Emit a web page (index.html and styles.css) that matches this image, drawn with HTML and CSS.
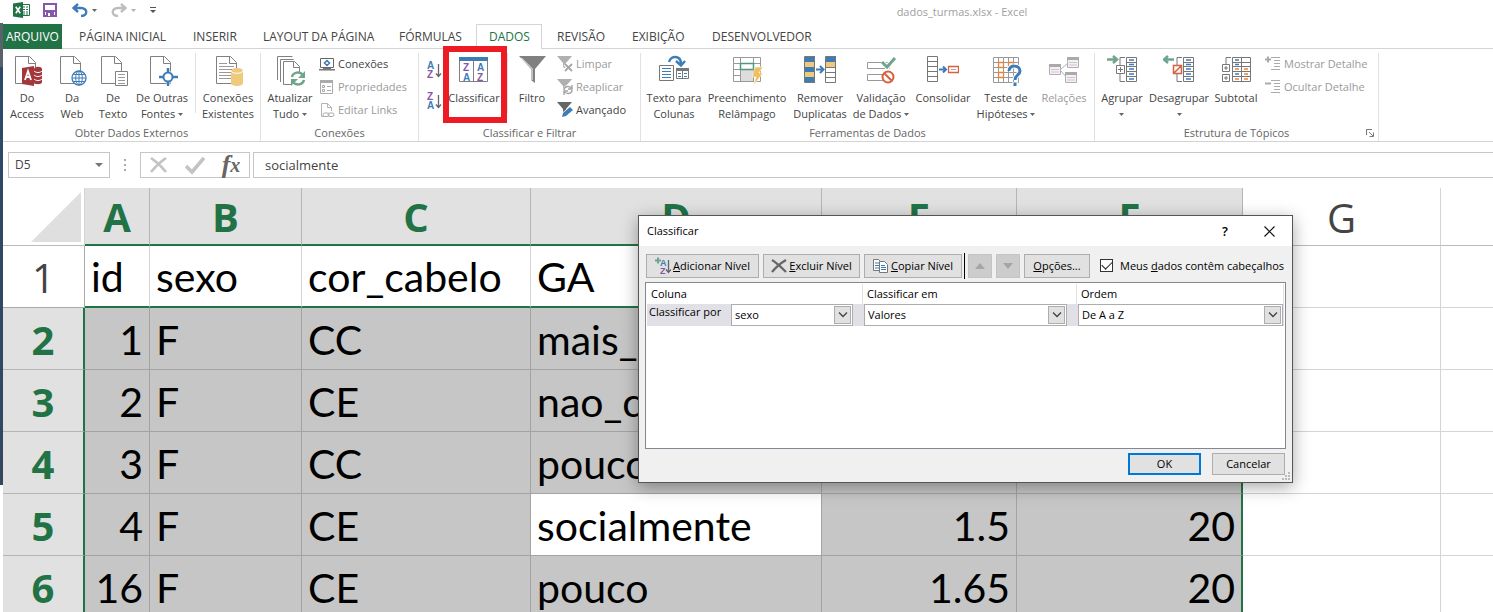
FILE: index.html
```html
<!DOCTYPE html>
<html lang="pt-BR">
<head>
<meta charset="utf-8">
<title>dados_turmas.xlsx - Excel</title>
<link rel="stylesheet" href="styles.css">
</head>
<body>
<svg class="defs" aria-hidden="true">
  <defs>
    <symbol id="page" viewBox="0 0 32 32"><path d="M4.500 2.500h14l6 6v21h-20z" fill="#fff" stroke="#808080"/><path d="M17.500 2.500v7h7" fill="none" stroke="#808080"/></symbol>
    <symbol id="down" viewBox="0 0 5 3"><path d="M0 0h5L2.500 3z" fill="#666"/></symbol>
    <symbol id="chevron" viewBox="0 0 10 6"><path d="M1 .5l4 4 4-4" fill="none" stroke="#444" stroke-width="1.300"/></symbol>
    <symbol id="funnel" viewBox="0 0 16 16"><path d="M0 0h15L9 7v6L6 11V7z"/></symbol>
  </defs>
</svg>
<div class="shell">
  <div class="backdrop"></div>
  <main class="app">
    <header class="titlebar">
      <div class="quick">
        <svg class="q-excel" width="17" height="16" viewBox="0 0 17 16"><path d="M8 2.500h8.500v11H8" fill="#fff" stroke="#217346"/><path d="M10 5h2M13 5h2M10 7.500h2M13 7.500h2M10 10h2M13 10h2M10 12h2M13 12h2" stroke="#217346"/><path d="M0 1.500L10 0v16L0 14.500z" fill="#217346"/><path d="M2.800 4.800l4.400 6.400M7.200 4.800l-4.400 6.400" stroke="#fff" stroke-width="1.600"/></svg>
        <svg class="q-save" width="14" height="14" viewBox="0 0 14 14"><path d="M1 1h12v12H1z" fill="#fff" stroke="#8756a8" stroke-width="2"/><path d="M2 8h10" stroke="#8756a8" stroke-width="2"/><path d="M3 9h8v4H3z" fill="#8756a8"/><path d="M5 10h2v3H5z" fill="#fff"/></svg>
        <svg class="q-undo" width="16" height="14" viewBox="0 0 16 14"><path d="M6 1L1.500 5 6 9M2 5h7c7 0 7 8 0 8" fill="none" stroke="#3e7cb8" stroke-width="2.400"/></svg>
        <svg class="q-arrow" width="5" height="3"><use href="#down"/></svg>
        <svg class="q-redo" width="16" height="14" viewBox="0 0 16 14"><path d="M10 1l4.500 4L10 9M14 5H7c-7 0-7 8 0 8" fill="none" stroke="#bdbdbd" stroke-width="2.400"/></svg>
        <svg class="q-arrow faint" width="5" height="3"><use href="#down"/></svg>
        <svg class="q-more" width="6" height="6" viewBox="0 0 6 6"><path d="M0 .5h6" stroke="#555"/><path d="M0 3h6L3 6z" fill="#555"/></svg>
      </div>
      <h1 class="doc">dados_turmas.xlsx - Excel</h1>
    </header>

    <nav class="tabs">
      <button class="tab file">ARQUIVO</button>
      <button class="tab">PÁGINA INICIAL</button>
      <button class="tab">INSERIR</button>
      <button class="tab">LAYOUT DA PÁGINA</button>
      <button class="tab">FÓRMULAS</button>
      <button class="tab active">DADOS</button>
      <button class="tab">REVISÃO</button>
      <button class="tab">EXIBIÇÃO</button>
      <button class="tab">DESENVOLVEDOR</button>
    </nav>

    <div class="ribbon">
      <section class="group g-external">
        <div class="tools">
          <button class="big"><svg width="32" height="32"><use href="#page"/><path d="M23 15c0-3 8-3 8 0v13c0 3-8 3-8 0z" fill="#a4373a"/><path d="M23 17c2 2 6 2 8 0M23 21c2 2 6 2 8 0M23 25c2 2 6 2 8 0" fill="none" stroke="#fff" /><path d="M11 14l12-2v20l-12-2z" fill="#a4373a"/><path d="M14 26l3-9 3 9M15 23h4" fill="none" stroke="#fff" stroke-width="1.800"/></svg><span>Do<br>Access</span></button>
          <button class="big"><svg width="32" height="32"><use href="#page"/><circle cx="23" cy="24" r="7" fill="#fff" stroke="#3e7cb8" stroke-width="1.300"/><ellipse cx="23" cy="24" rx="3.300" ry="7" fill="none" stroke="#3e7cb8"/><path d="M23 17v14M16 24h14M17 20.500h12M17 27.500h12" stroke="#3e7cb8"/></svg><span>Da<br>Web</span></button>
          <button class="big"><svg width="32" height="32"><use href="#page"/><path d="M18.500 17.500h12v14h-12z" fill="#fff" stroke="#808080"/><path d="M21 20.500h7M21 23.500h7M21 26.500h7M21 29.500h7" stroke="#999"/></svg><span>De<br>Texto</span></button>
          <button class="big"><svg width="32" height="32"><use href="#page"/><path d="M22 15l8 8-8 8-8-8z" fill="#fff"/><circle cx="22" cy="23" r="4.500" fill="#fff" stroke="#3e7cb8" stroke-width="2"/><path d="M22 14v5M22 27v5M13 23h5M26 23h6" stroke="#3e7cb8" stroke-width="2.500"/></svg><span>De Outras<br>Fontes <svg class="dd"><use href="#down"/></svg></span></button>
          <i class="rule"></i>
          <button class="big"><svg width="32" height="32"><use href="#page"/><path d="M7 9.500h8M7 12.500h15M7 15.500h15M7 18.500h12M7 21.500h12M7 24.500h12" stroke="#999"/><path d="M19 17c0-4 12-4 12 0v12c0 4-12 4-12 0z" fill="#efc97c"/><path d="M19 17c1 3 11 3 12 0" fill="none" stroke="#fff"/></svg><span>Conexões<br>Existentes</span></button>
        </div>
        <h2>Obter Dados Externos</h2>
      </section>

      <section class="group g-links">
        <div class="tools">
          <button class="big"><svg width="32" height="32"><path d="M3.500 26V2.500h15M6.500 28V5.500h13" fill="none" stroke="#808080"/><path d="M9.500 7.500h11l5 5v18h-16z" fill="#fff" stroke="#808080"/><path d="M19.500 8v5.500h6" fill="none" stroke="#808080"/><path d="M17 18h14v14H17z" fill="#fff"/><path d="M18 23c1-5 8-6 11-2M30 26c-1 5-8 6-11 2" fill="none" stroke="#6fa58c" stroke-width="2.500"/><path d="M31 17v7h-7zM17 32v-7h7z" fill="#6fa58c"/></svg><span>Atualizar<br>Tudo <svg class="dd"><use href="#down"/></svg></span></button>
          <div class="list">
            <button class="small"><svg width="16" height="16"><path d="M1.500 2.500h13v9h-13z" fill="#fff" stroke="#666"/><path d="M0 13h16v1.500H0zM4 12h8v2H4z" fill="#777"/><path d="M8 4.500l2.500 2.500L8 9.500 5.500 7z" fill="#fff" stroke="#3e7cb8" stroke-width="1.500"/></svg>Conexões</button>
            <button class="small off"><svg width="16" height="16"><path d="M1.500 1.500h12v13h-12z" fill="#fff" stroke="#aaa"/><path d="M1 1h13v3H1z" fill="#aaa"/><path d="M3.500 6.500h2v2h-2zM3.500 10.500h2v2h-2zM8 7.500h4M8 11.500h4" stroke="#aaa" fill="none"/></svg>Propriedades</button>
            <button class="small off"><svg width="16" height="16"><path d="M8 14.500H2.500v-13h6l4 4V9M8.500 1.500v4h4" fill="#fff" stroke="#b5b5b5"/><rect x="4" y="11" width="6" height="3.500" rx="1.700" fill="#fff" stroke="#aaa"/><rect x="9" y="11" width="6" height="3.500" rx="1.700" fill="none" stroke="#aaa"/></svg>Editar Links</button>
          </div>
        </div>
        <h2>Conexões</h2>
      </section>

      <section class="group g-sort">
        <div class="tools">
          <div class="orders">
            <button aria-label="Classificar de A a Z"><svg width="16" height="18"><text x="1" y="8" class="ga">A</text><text x="1" y="17" class="gz">Z</text><path d="M12.500 3v12M10 12.500l2.500 3 2.500-3" fill="none" stroke="#666" stroke-width="1.300"/></svg></button>
            <button aria-label="Classificar de Z a A"><svg width="16" height="18"><text x="1" y="8" class="gz">Z</text><text x="1" y="17" class="ga">A</text><path d="M12.500 3v12M10 12.500l2.500 3 2.500-3" fill="none" stroke="#666" stroke-width="1.300"/></svg></button>
          </div>
          <button class="big marked"><svg width="32" height="32"><path d="M1.500 4.500h28v23h-28zM15.500 7v21" fill="#fff" stroke="#808080"/><path d="M1 3h29v4H1z" fill="#3e7cb8"/><text x="5" y="17" class="gz">Z</text><text x="5" y="27" class="ga">A</text><text x="19" y="17" class="ga">A</text><text x="19" y="27" class="gz">Z</text></svg><span>Classificar</span></button>
          <i class="rule"></i>
          <button class="big"><svg width="32" height="32"><path d="M3 2h27L19 15v14l-4-3V15z" fill="#808080"/><path d="M5.500 4l10.500 10.500V26" fill="none" stroke="#fff"/></svg><span>Filtro</span></button>
          <div class="list">
            <button class="small off"><svg width="16" height="16"><use href="#funnel" fill="#b0b0b0"/><path d="M8 8l7 7M15 8l-7 7" stroke="#fff" stroke-width="4"/><path d="M8 8l7 7M15 8l-7 7" stroke="#a5a5a5" stroke-width="1.800"/></svg>Limpar</button>
            <button class="small off"><svg width="16" height="16"><use href="#funnel" fill="#b0b0b0"/><circle cx="11" cy="11" r="5" fill="#fff"/><path d="M7 11c0-4 6-5 8-1M15 11c0 4-6 5-8 1M15 6v4h-4M7 16v-4h4" fill="none" stroke="#a5a5a5" stroke-width="1.400"/></svg>Reaplicar</button>
            <button class="small"><svg width="16" height="16"><use href="#funnel" fill="#666"/><path d="M4 16l1-5 8-7 4 4-8 8z" fill="#fff"/><path d="M5 15l1-4 7-6 3 3-7 6z" fill="#3e7cb8"/></svg>Avançado</button>
          </div>
        </div>
        <h2>Classificar e Filtrar</h2>
      </section>

      <section class="group g-data">
        <div class="tools">
          <button class="big"><svg width="32" height="32"><path d="M1.500 11.500h14v15h-14z" fill="#fff" stroke="#777"/><path d="M4 14.500h9M4 17.500h9M4 20.500h9M4 23.500h9" stroke="#3e7cb8"/><path d="M18.500 14.500h12v10h-12zM24.500 17v8" fill="#fff" stroke="#777"/><path d="M18 14h13v3H18z" fill="#777"/><path d="M20 19.500h3M26 19.500h3M20 22.500h3M26 22.500h3" stroke="#3e7cb8"/><path d="M11 8c2-7 12-7 12 2M18 7l5 4.500L27 7" fill="none" stroke="#3e7cb8" stroke-width="2.400"/></svg><span>Texto para<br>Colunas</span></button>
          <button class="big"><svg width="32" height="32"><path d="M2.500 3.500h27v24h-27zM2.500 9.500h27M2.500 15.500h27M2.500 21.500h27M9.500 3.500v24M22.500 3.500v24" fill="#fff" stroke="#999"/><path d="M10 16h12v11H10z" fill="#ddd"/><path d="M9.500 9.500h13v6h-13z" fill="#fff" stroke="#4f9a78" stroke-width="1.500"/><path d="M24 13h8l-4 6h4L22 32l3-9h-4z" fill="#efc060" stroke="#fff" stroke-width=".6"/></svg><span>Preenchimento<br>Relâmpago</span></button>
          <button class="big"><svg width="32" height="32"><path d="M1 2h10v27H1zM22 2h10v6H22z" fill="#3e7cb8"/><path d="M1 8h10v5H1zM1 18h10v5H1zM22 8h10v5H22z" fill="#efc97c"/><path d="M.5 2.500h10v26H.5zM21.500 2.500h10v26h-10zM21.500 13.500h10M21.500 18.500h10M21.500 23.500h10" fill="none" stroke="#777"/><path d="M12 15.500h6M16 12l3.500 3.500L16 19" fill="none" stroke="#3e7cb8" stroke-width="2"/></svg><span>Remover<br>Duplicatas</span></button>
          <button class="big"><svg width="32" height="32"><path d="M2.500 8.500h22v6h-22zM2.500 20.500h20v6h-20z" fill="#fff" stroke="#999"/><path d="M17 8l5 5 9-10" fill="none" stroke="#fff" stroke-width="5"/><path d="M17 8l5 5 8-9" fill="none" stroke="#6fa58c" stroke-width="3"/><circle cx="23" cy="23" r="5.500" fill="#fff" stroke="#d8603f" stroke-width="2"/><path d="M19 19l8 8" stroke="#d8603f" stroke-width="2"/></svg><span>Validação<br>de Dados <svg class="dd"><use href="#down"/></svg></span></button>
          <button class="big"><svg width="32" height="32"><path d="M.5 2.500h10v25H.5zM.5 7.500h10M.5 12.500h10M.5 17.500h10M.5 22.500h10" fill="#fff" stroke="#777"/><path d="M12 15.500h6M16 12.500l3 3-3 3" fill="none" stroke="#3e7cb8" stroke-width="2"/><path d="M21.500 12.500h10v6h-10z" fill="#fff" stroke="#d8603f" stroke-width="1.300"/><path d="M24 15.500h5" stroke="#aaa"/></svg><span>Consolidar</span></button>
          <button class="big"><svg width="32" height="32"><path d="M3.500 3.500h25v25h-25zM3.500 8.500h25M3.500 13.500h25M3.500 18.500h25M3.500 23.500h25M8.500 3.500v25M13.500 3.500v25M18.500 3.500v25M23.500 3.500v25" fill="#fff" stroke="#999"/><path d="M8.500 8.500h5v5h-5zM8.500 18.500h5v5h-5zM18.500 8.500h5v5h-5z" fill="#fff" stroke="#e8833a" stroke-width="1.300"/><path d="M19 17c0-7 11-6 11 0 0 4-5 4-5 9M25 28v4" fill="none" stroke="#fff" stroke-width="5"/><path d="M19 17c0-7 11-6 11 0 0 4-5 4-5 9M25 28.500v3.500" fill="none" stroke="#3e7cb8" stroke-width="3"/></svg><span>Teste de<br>Hipóteses <svg class="dd"><use href="#down"/></svg></span></button>
          <button class="big off"><svg width="32" height="32"><path d="M12 16l9-8M12 16l8 9" stroke="#b0b0b0"/><path d="M1.500 10.500h11v10h-11zM19.500 3.500h11v10h-11zM17.500 18.500h11v10h-11z" fill="#f6f0f6" stroke="#b0b0b0"/><path d="M1 10h12v3H1zM19 3h12v3H19zM17 18h12v3H17z" fill="#aaa"/><path d="M3 15.500h8M3 18h8M21 8.500h8M21 11h8M19 23.500h8M19 26h8" stroke="#d0c4d0"/></svg><span>Relações</span></button>
        </div>
        <h2>Ferramentas de Dados</h2>
      </section>

      <section class="group g-outline">
        <div class="tools">
          <button class="big"><svg width="32" height="32"><path d="M20.500 3.500h10v24h-10zM20.500 8.500h10M20.500 12.500h10M20.500 17.500h10M20.500 22.500h10M19 3.500h-5V11M14 20v7.500h5M10.500 11.500h8v8h-8zM12 15.500h5M14.500 13v5" fill="none" stroke="#777"/><path d="M23 6h5M23 10.500h5M23 15h5M23 20h5M23 25h5" stroke="#3e7cb8" stroke-width="1.500"/><path d="M1 5.500h9M7 2l4 3.500L7 9" fill="none" stroke="#6fa58c" stroke-width="2.500"/></svg><span>Agrupar<br><svg class="dd"><use href="#down"/></svg></span></button>
          <button class="big"><svg width="32" height="32"><path d="M20.500 3.500h10v24h-10zM20.500 8.500h10M20.500 12.500h10M20.500 17.500h10M20.500 22.500h10M19 3.500h-5V11M14 20v7.500h5" fill="none" stroke="#777"/><path d="M23 6h5M23 10.500h5M23 15h5M23 20h5M23 25h5" stroke="#3e7cb8" stroke-width="1.500"/><path d="M10.500 11.500h8v8h-8zM11 19l7-7" fill="none" stroke="#d8603f" stroke-width="1.500"/><path d="M11 5.500H2M5 2L1 5.500 5 9" fill="none" stroke="#6fa58c" stroke-width="2.500"/></svg><span>Desagrupar<br><svg class="dd"><use href="#down"/></svg></span></button>
          <button class="big"><svg width="32" height="32"><path d="M12.500 3.500h18v24h-18zM21.500 3.500v24M12.500 8.500h18M12.500 12.500h18M12.500 17.500h18M12.500 22.500h18M11 3.500H6V10M2.500 10.500h7v7h-7zM2.500 20.500h7v7h-7zM4 14h4M6 12v4M4 24h4M6 22v4" fill="none" stroke="#777"/><path d="M15 6h4M15 10.500h4M15 20h4" stroke="#3e7cb8" stroke-width="1.500"/><path d="M15 15h4M24 15h4M24 20h4M15 25h4M24 25h4" stroke="#e8833a" stroke-width="1.500"/></svg><span>Subtotal</span></button>
          <div class="list">
            <button class="small off"><svg width="16" height="16"><path d="M0 3.500h6M3 .5v6" stroke="#aaa" stroke-width="2"/><path d="M6 1.500h9M9 4.500h6M9 7.500h6M9 10.500h6M6 13.500h9" stroke="#aaa"/></svg>Mostrar Detalhe</button>
            <button class="small off"><svg width="16" height="16"><path d="M0 4.500h6" stroke="#aaa" stroke-width="2"/><path d="M6 1.500h9M9 4.500h6M9 7.500h6M9 10.500h6M6 13.500h9" stroke="#aaa"/></svg>Ocultar Detalhe</button>
          </div>
        </div>
        <h2>Estrutura de Tópicos</h2>
        <button class="launcher" aria-label="Configurações"><svg width="8" height="8"><path d="M.5 6V.5H6M3 3l4 4M7.500 3.500v4h-4" fill="none" stroke="#777"/></svg></button>
      </section>
    </div>

    <div class="formula">
      <div class="namebox"><input type="text" value="D5" aria-label="Caixa de nome"><svg width="8" height="4" viewBox="0 0 5 3" preserveAspectRatio="none"><path d="M0 0h5L2.500 3z" fill="#777"/></svg></div>
      <svg class="dots" width="2" height="12"><path d="M0 0h2v2H0zM0 5h2v2H0zM0 10h2v2H0z" fill="#aaa"/></svg>
      <div class="actions">
        <button aria-label="Cancelar"><svg width="20" height="20"><path d="M2 3c6 4 11 9 15 14M17 3C11 7 6 12 2 17" fill="none" stroke="#c3c3c3" stroke-width="2.600"/></svg></button>
        <button aria-label="Inserir"><svg width="20" height="20"><path d="M1 11l6 6L19 3" fill="none" stroke="#c3c3c3" stroke-width="3.600"/></svg></button>
        <button class="fx" aria-label="Inserir função"><span>f</span><small>x</small></button>
      </div>
      <input class="content" type="text" value="socialmente" aria-label="Barra de fórmulas">
    </div>

    <div class="sheet">
      <table>
        <colgroup><col class="c-head"><col class="c-a"><col class="c-b"><col class="c-c"><col class="c-d"><col class="c-e"><col class="c-f"><col class="c-g"><col></colgroup>
        <thead>
          <tr><th class="corner"><svg width="50" height="50"><path d="M50 0v50H0z" fill="#dfdfdf"/></svg></th><th class="on">A</th><th class="on">B</th><th class="on">C</th><th class="on">D</th><th class="on">E</th><th class="on">F</th><th>G</th><th></th></tr>
        </thead>
        <tbody>
          <tr class="first"><th>1</th><td>id</td><td>sexo</td><td>cor_cabelo</td><td>GA</td><td></td><td></td><td></td><td></td></tr>
          <tr class="sel"><th>2</th><td class="n">1</td><td>F</td><td>CC</td><td>mais_</td><td></td><td></td><td></td><td></td></tr>
          <tr class="sel"><th>3</th><td class="n">2</td><td>F</td><td>CE</td><td>nao_c</td><td></td><td></td><td></td><td></td></tr>
          <tr class="sel"><th>4</th><td class="n">3</td><td>F</td><td>CC</td><td>pouco</td><td></td><td></td><td></td><td></td></tr>
          <tr class="sel"><th>5</th><td class="n">4</td><td>F</td><td>CE</td><td class="current">socialmente</td><td class="n">1.5</td><td class="n">20</td><td></td><td></td></tr>
          <tr class="sel"><th>6</th><td class="n">16</td><td>F</td><td>CE</td><td>pouco</td><td class="n">1.65</td><td class="n">20</td><td></td><td></td></tr>
        </tbody>
      </table>
    </div>
  </main>
</div>

<div class="dialog" role="dialog" aria-labelledby="dlg-title">
  <div class="dlg-bar">
    <h2 id="dlg-title">Classificar</h2>
    <button class="help" aria-label="Ajuda">?</button>
    <button class="close" aria-label="Fechar"><svg width="11" height="11"><path d="M.5 .5l10 10M10.500 .5l-10 10" stroke="#111" stroke-width="1.200"/></svg></button>
  </div>
  <div class="dlg-tools">
    <button class="btn add"><svg width="16" height="18"><path d="M0 3.500h6M3 .5v6" stroke="#6fa58c" stroke-width="2"/><text x="5" y="9" class="ga sm">A</text><text x="5" y="17" class="gz sm">Z</text><path d="M13.500 3v12M11 12.500l2.500 3 2.500-3" fill="none" stroke="#666" stroke-width="1.300"/></svg><span><u>A</u>dicionar Nível</span></button>
    <button class="btn del"><svg width="16" height="16"><path d="M1 2c5 3 10 8 14 12M15 2C10 5 5 9 1 14" fill="none" stroke="#666" stroke-width="2.200"/></svg><span><u>E</u>xcluir Nível</span></button>
    <button class="btn copy"><svg width="16" height="16"><path d="M.5 1.500h5l2 2v9h-7z" fill="#fff" stroke="#777"/><path d="M2 5h4M2 7.500h4M2 10h4" stroke="#3e7cb8"/><path d="M6.500 3.500h5l3 3v8h-8z" fill="#fff" stroke="#777"/><path d="M8 7.500h4M8 9.500h5M8 11.500h5" stroke="#3e7cb8"/></svg><span><u>C</u>opiar Nível</span></button>
    <i class="bar"></i>
    <button class="btn move" disabled aria-label="Mover para cima"><svg width="10" height="6"><path d="M0 6l5-6 5 6z" fill="#a5a5a5"/></svg></button>
    <button class="btn move" disabled aria-label="Mover para baixo"><svg width="10" height="6"><path d="M0 0l5 6 5-6z" fill="#a5a5a5"/></svg></button>
    <button class="btn opt"><span><u>O</u>pções...</span></button>
    <label class="check"><input type="checkbox" checked><span>Meus <u>d</u>ados contêm cabeçalhos</span></label>
  </div>
  <div class="levels">
    <div class="lv-head"><span>Coluna</span><span>Classificar em</span><span>Ordem</span></div>
    <div class="lv-row">
      <label for="by">Classificar por</label>
      <div class="combo"><select id="by"><option>sexo</option></select><span class="arrow"><svg width="10" height="6"><use href="#chevron"/></svg></span></div>
      <div class="combo"><select aria-label="Classificar em"><option>Valores</option></select><span class="arrow"><svg width="10" height="6"><use href="#chevron"/></svg></span></div>
      <div class="combo"><select aria-label="Ordem"><option>De A a Z</option></select><span class="arrow"><svg width="10" height="6"><use href="#chevron"/></svg></span></div>
    </div>
  </div>
  <div class="dlg-foot">
    <button class="btn ok">OK</button>
    <button class="btn">Cancelar</button>
  </div>
  <svg class="grip" width="8" height="8"><path d="M6 0h2v2H6zM3 3h2v2H3zM6 3h2v2H6zM0 6h2v2H0zM3 6h2v2H3zM6 6h2v2H6z" fill="#bbb"/></svg>
</div>
</body>
</html>
```

FILE: styles.css
```css
*, *::before, *::after { box-sizing: border-box; }
body { margin: 0; background: #fff; color: #444; font: 11px/16px "Open Sans", "Noto Sans", sans-serif; overflow: hidden; }
button, input, select { font: inherit; color: inherit; margin: 0; padding: 0; border: 0; background: none; }
h1, h2 { margin: 0; font-size: inherit; font-weight: 400; }
svg { flex: none; }
.defs { position: absolute; width: 0; height: 0; }

.shell { display: flex; height: 100vh; overflow: hidden; }
.backdrop { flex: none; width: 3px; height: 462px; margin-top: 23px; background: linear-gradient(#59616b 44px, #2e4a6b 44px, #33475f); }
.app { flex: 1; min-width: 0; }

/* Title bar */
.titlebar { display: flex; height: 24px; }
.quick { display: flex; align-items: center; flex: 0 0 428px; height: 20px; padding-left: 10px; }
.q-save { margin-left: 13px; }
.q-undo { margin-left: 15px; }
.q-arrow { margin-left: 4px; }
.q-redo { margin-left: 14px; }
.q-more { margin-left: 14px; }
.faint { opacity: .5; }
.doc { flex: 1; padding-top: 4px; text-align: center; color: #a0a0a0; }

/* Tabs */
.tabs { display: grid; grid-template-columns: 63px 114px 70px 136px 90px 68px 75px 80px 1fr; height: 25px; border-bottom: 1px solid #d4d4d4; font-size: 12px; }
.tab { padding: 0 0 0 13px; text-align: left; white-space: nowrap; }
.tab.file { width: 59px; padding: 0; text-align: center; background: #217346; color: #fff; }
.tab.active { width: 66px; height: 25px; padding-left: 12px; border: 1px solid #d4d4d4; border-bottom: 0; background: #fff; color: #217346; }

/* Ribbon */
.ribbon { display: flex; height: 93px; border-bottom: 1px solid #d4d4d4; }
.group { position: relative; display: flex; flex-direction: column; flex: none; height: 88px; margin-top: 4px; border-right: 1px solid #e1e1e1; }
.tools { display: grid; height: 72px; }
.group h2 { text-align: center; color: #666; }
.g-external { width: 258px; }
.g-external .tools { grid-template-columns: 48px 42px 40px 58px 8px 58px; }
.g-links { width: 158px; }
.g-links .tools { grid-template-columns: 58px 1fr; }
.g-sort { width: 222px; }
.g-sort .tools { grid-template-columns: 26px 58px 8px 42px 1fr; }
.g-sort .list { padding-left: 4px; }
.g-data { width: 454px; }
.g-data .tools { grid-template-columns: 66px 80px 66px 56px 68px 58px 58px; }
.g-outline { width: 284px; }
.g-outline .tools { grid-template-columns: 54px 60px 54px 1fr; }
.g-outline .list { padding-left: 2px; }
.big { position: relative; display: flex; flex-direction: column; align-items: center; justify-content: flex-start; gap: 4px; min-width: 0; padding-top: 1px; white-space: nowrap; }
.dd { width: 5px; height: 3px; vertical-align: 2px; }
.off { color: #9a9a9a; }
.rule { justify-self: center; width: 1px; height: 60px; background: #e1e1e1; }
.list { display: flex; flex-direction: column; gap: 1px; }
.small { display: flex; align-items: center; gap: 3px; height: 22px; white-space: nowrap; }
.orders { display: flex; flex-direction: column; gap: 13px; padding: 8px 0 0 7px; }
.orders button { height: 18px; }
.orders svg { display: block; }
.ga, .gz { font: 700 10px "Liberation Sans", sans-serif; }
.sm { font-size: 9px; }
.ga { fill: #3e7cb8; }
.gz { fill: #8756a8; }
.marked::after { content: ""; position: absolute; z-index: 1; top: -7px; left: -2px; width: 64px; height: 77px; border: 6px solid #ed1c24; }
.launcher { position: absolute; right: 4px; bottom: 4px; }
.launcher svg { display: block; }

/* Formula bar */
.formula { display: flex; height: 46px; padding: 10px 0 10px 5px; }
.namebox, .actions, .content { height: 26px; border: 1px solid #c6c6c6; }
.namebox { display: flex; align-items: center; width: 102px; padding: 0 6px; font-size: 12px; }
.namebox input { flex: 1; min-width: 0; }
.dots { margin: 7px 14px 0; }
.actions { display: grid; grid-template-columns: repeat(3, 36px); width: 110px; margin-right: 3px; }
.actions button { display: flex; align-items: center; justify-content: center; }
.fx { font: italic 700 26px/20px "Liberation Serif", serif; color: #666; }
.fx small { font-size: 20px; }
.content { flex: 1; min-width: 0; padding-left: 11px; border-right: 0; font-size: 13px; }

/* Worksheet */
.sheet { overflow: hidden; }
table { width: 100%; table-layout: fixed; border-collapse: separate; border-spacing: 0; }
.c-head { width: 82px; }
.c-a { width: 65px; }
.c-b { width: 152px; }
.c-c { width: 229px; }
.c-d { width: 291px; }
.c-e { width: 195px; }
.c-f { width: 226px; }
.c-g { width: 198px; }
th, td { height: 62px; padding: 2px 6px 0; overflow: hidden; border-right: 1px solid #d4d4d4; border-bottom: 1px solid #d4d4d4; white-space: nowrap; font-size: 40px; line-height: 48px; }
th { padding: 2px 0 0; font-family: "Open Sans", sans-serif; font-weight: 400; }
td { font-family: Lato, Carlito, sans-serif; font-size: 41px; color: #000; text-align: left; }
th:last-child, td:last-child { border-right: 0; }
thead th { height: 58px; border-bottom-color: #bbb; }
thead .on { border-right-color: #b5b5b5; border-bottom: 2px solid #217346; background: #e1e1e1; color: #217346; font-weight: 700; }
thead .corner { vertical-align: top; }
.corner svg { display: block; margin: 2px 0 0 28px; }
tbody th { border-right-color: #aaa; }
.first th { border-bottom-color: #aaa; }
.first td:nth-child(-n+7) { border-bottom: 2px solid #217346; }
.sel th { border-right: 2px solid #217346; border-bottom-color: #b5b5b5; background: #e1e1e1; color: #217346; font-weight: 700; }
.sel td:nth-child(-n+7) { border-right-color: #a3a3a3; border-bottom-color: #a3a3a3; background: #c6c6c6; }
.sel td:nth-child(7) { border-right: 2px solid #217346; }
.sel td.current { background: #fff; }
.n { text-align: right; }

/* Dialog */
.dialog { position: absolute; top: 215px; left: 638px; width: 655px; border: 1px solid #555; background: #f0f0f0; color: #000; box-shadow: 0 4px 16px rgba(0, 0, 0, .35); }
.dlg-bar { display: flex; align-items: center; height: 30px; padding: 0 17px 0 8px; background: #fff; }
.dlg-bar h2 { flex: 1; }
.dlg-bar button { display: flex; }
.help { margin-right: 36px; font-size: 13px; font-weight: 600; }
.dlg-tools { display: flex; align-items: center; gap: 4px; height: 36px; padding: 3px 7px 0; white-space: nowrap; }
.btn { display: flex; align-items: center; justify-content: center; gap: 2px; height: 24px; border: 1px solid #adadad; background: #e1e1e1; }
.add { width: 113px; }
.del { width: 97px; }
.copy { width: 98px; }
.move { width: 24px; border-color: #c4c4c4; background: #ccc; }
.opt { width: 66px; }
.bar { width: 1px; height: 26px; margin: 0 -1px 0 -2px; background: #000; }
.check { display: flex; align-items: center; gap: 7px; margin-left: 6px; }
.check input { appearance: none; width: 13px; height: 13px; border: 1px solid #333; background: #fff; }
.check input:checked::before { content: ""; display: block; width: 10px; height: 6px; margin: 1px; border: solid #222; border-width: 0 0 1px 1px; transform: rotate(-45deg); }
.levels { height: 167px; margin: 0 6px; padding: 1px; border: 1px solid #828790; background: #fff; }
.lv-head { display: grid; grid-template-columns: 216px 214px 1fr; height: 20px; line-height: 20px; }
.lv-head span { padding-left: 4px; border-right: 1px solid #e1e1e1; }
.lv-row { display: grid; grid-template-columns: 73px 122px 203px 205px; column-gap: 11px; height: 22px; background: #e1e0e6; }
.lv-row label { padding-left: 2px; white-space: nowrap; }
.combo { position: relative; height: 22px; border: 1px solid #adadad; background: #fff; }
.combo select { appearance: none; width: 100%; height: 20px; padding-left: 3px; }
.arrow { position: absolute; top: 1px; right: 1px; display: flex; align-items: center; justify-content: center; width: 17px; height: 18px; border: 1px solid #adadad; background: #e1e1e1; pointer-events: none; }
.dlg-foot { display: flex; justify-content: flex-end; gap: 11px; padding: 4px 7px 7px; }
.dlg-foot .btn { width: 73px; height: 22px; }
.dlg-foot .ok { border: 2px solid #0078d7; }
.grip { position: absolute; right: 2px; bottom: 2px; }
```
